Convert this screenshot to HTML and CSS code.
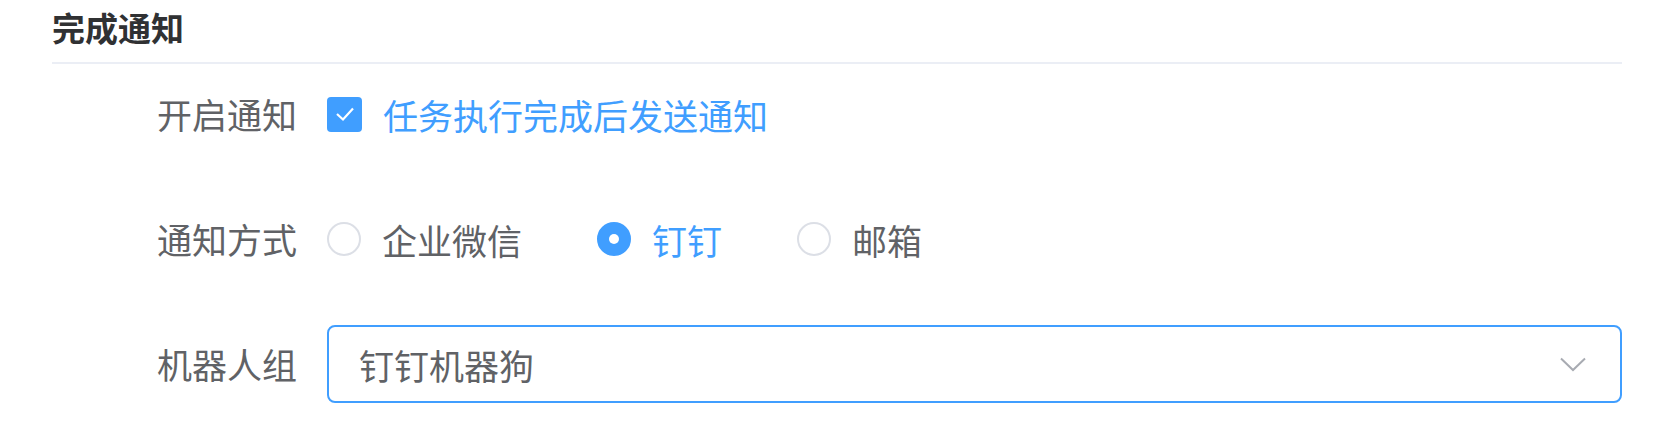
FILE: index.html
```html
<!DOCTYPE html>
<html lang="zh">
<head>
<meta charset="utf-8">
<title>完成通知</title>
<link rel="stylesheet" href="styles.css">
</head>
<body>
<section class="section">
  <h2 class="title">完成通知</h2>
  <div class="form">
    <div class="row">
      <label class="label">开启通知</label>
      <div class="control">
        <span class="checkbox">
          <svg width="20" height="16" viewBox="0 0 20 16"><polyline points="2,8 8,13.5 18,2.5" fill="none" stroke="#fff" stroke-width="2.2"/></svg>
        </span>
        <span class="checkbox-text">任务执行完成后发送通知</span>
      </div>
    </div>
    <div class="row">
      <label class="label">通知方式</label>
      <div class="control">
        <span class="radio-item"><span class="radio"></span><span class="radio-text">企业微信</span></span>
        <span class="radio-item is-checked"><span class="radio"></span><span class="radio-text">钉钉</span></span>
        <span class="radio-item"><span class="radio"></span><span class="radio-text">邮箱</span></span>
      </div>
    </div>
    <div class="row">
      <label class="label">机器人组</label>
      <div class="control">
        <div class="select">
          <span class="select-value">钉钉机器狗</span>
          <svg class="chevron" width="26" height="15" viewBox="0 0 26 15"><polyline points="1,1.5 13,13 25,1.5" fill="none" stroke="#a8abb2" stroke-width="2"/></svg>
        </div>
      </div>
    </div>
  </div>
</section>
</body>
</html>
```
FILE: styles.css
```css
html, body {
  margin: 0;
  padding: 0;
  background: #fff;
}
body {
  font-family: "Noto Sans CJK SC", "Noto Sans", sans-serif;
  color: #606266;
}
.section {
  width: 1570px;
  padding-left: 52px;
}
.title {
  margin: 0;
  font-size: 33px;
  font-weight: 700;
  color: #303133;
  line-height: 55px;
  padding-bottom: 7px;
  border-bottom: 2px solid #ebeef5;
}
.form {
  padding-top: 11px;
}
.row {
  display: flex;
  align-items: center;
  height: 78px;
  margin-bottom: 47px;
}
.label {
  width: 245px;
  padding-right: 30px;
  text-align: right;
  font-size: 35px;
  line-height: 78px;
  color: #606266;
  flex: none;
}
.control {
  flex: 1;
  display: flex;
  align-items: center;
  height: 100%;
}
.checkbox {
  width: 35px;
  height: 35px;
  border-radius: 4px;
  background: #409eff;
  display: flex;
  align-items: center;
  justify-content: center;
  flex: none;
}
.checkbox-text {
  margin-left: 21px;
  font-size: 35px;
  color: #409eff;
}
.radio-item {
  display: flex;
  align-items: center;
  margin-right: 75px;
}
.radio {
  width: 34px;
  height: 34px;
  box-sizing: border-box;
  border: 2px solid #dcdfe6;
  border-radius: 50%;
  background: #fff;
  position: relative;
  flex: none;
}
.is-checked .radio {
  border-color: #409eff;
  background: #409eff;
}
.is-checked .radio::after {
  content: "";
  position: absolute;
  left: 50%;
  top: 50%;
  width: 10px;
  height: 10px;
  margin: -5px 0 0 -5px;
  border-radius: 50%;
  background: #fff;
}
.radio-text {
  margin-left: 21px;
  font-size: 35px;
  color: #606266;
}
.is-checked .radio-text {
  color: #409eff;
}
.select {
  width: 100%;
  height: 78px;
  box-sizing: border-box;
  border: 2px solid #409eff;
  border-radius: 8px;
  display: flex;
  align-items: center;
  justify-content: space-between;
  padding: 0 34px 0 30px;
}
.select-value {
  font-size: 35px;
  color: #606266;
}
.chevron {
  flex: none;
}
```
